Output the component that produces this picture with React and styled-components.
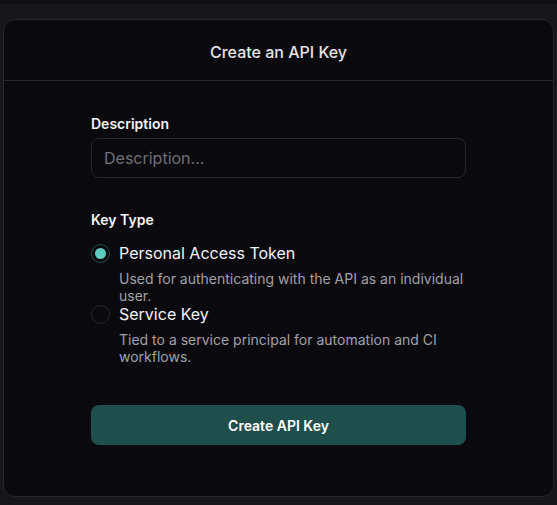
import React, { useState } from 'react';
import styled, { createGlobalStyle } from 'styled-components';

const GlobalStyle = createGlobalStyle`
  html, body {
    margin: 0;
    padding: 0;
    background: #17171b;
    font-family: Inter, "Noto Sans", sans-serif;
    -webkit-font-smoothing: antialiased;
  }
  * { box-sizing: border-box; }
`;

const Page = styled.div`
  width: 557px;
  height: 505px;
  background: #17171b;
  border-top: 4px solid #111114;
  padding: 15px 3px 0 3px;
`;

const Modal = styled.div`
  width: 551px;
  height: 478px;
  background: #0a0a0e;
  border: 1px solid #26262b;
  border-radius: 12px;
  display: flex;
  flex-direction: column;
  overflow: hidden;
`;

const Header = styled.div`
  height: 61px;
  flex: none;
  display: flex;
  align-items: center;
  justify-content: center;
  padding-top: 4px;
  border-bottom: 1px solid #26262b;
  color: #e4e4e7;
  font-size: 16px;
  font-weight: 500;
`;

const Body = styled.div`
  width: 375px;
  margin: 0 auto;
  padding-top: 34px;
  display: flex;
  flex-direction: column;
`;

const Label = styled.div`
  color: #f4f4f5;
  font-size: 14px;
  font-weight: 600;
  line-height: 17px;
  margin-bottom: ${({ gap }) => gap}px;
`;

const Input = styled.input`
  width: 100%;
  height: 40px;
  background: transparent;
  border: 1px solid #27272b;
  border-radius: 8px;
  padding: 0 12px;
  color: #e4e4e7;
  font-family: inherit;
  font-size: 16px;
  outline: none;
  margin-bottom: 33px;
  &::placeholder {
    color: #6f6f76;
  }
`;

const Options = styled.div`
  display: flex;
  flex-direction: column;
`;

const Option = styled.label`
  display: grid;
  grid-template-columns: 19px 1fr;
  column-gap: 9px;
  cursor: pointer;
`;

const Radio = styled.span`
  width: 19px;
  height: 19px;
  border-radius: 50%;
  border: 1px solid ${({ checked }) => (checked ? '#1d4b47' : '#26262b')};
  display: flex;
  align-items: center;
  justify-content: center;
  align-self: center;
  &::after {
    content: '';
    width: 11px;
    height: 11px;
    border-radius: 50%;
    background: #5ecdbf;
    display: ${({ checked }) => (checked ? 'block' : 'none')};
  }
`;

const OptionTitle = styled.span`
  color: #f4f4f5;
  font-size: 16px;
  line-height: 21px;
`;

const OptionDesc = styled.span`
  grid-column: 2;
  color: #a1a1a8;
  font-size: 14px;
  line-height: 17px;
  margin-top: 6px;
`;

const Button = styled.button`
  margin-top: 40px;
  height: 40px;
  width: 100%;
  background: #1f4f4d;
  border: none;
  border-radius: 8px;
  color: #ffffff;
  font-family: inherit;
  font-size: 14px;
  font-weight: 600;
  cursor: pointer;
`;

const keyTypes = [
  {
    id: 'pat',
    title: 'Personal Access Token',
    desc: 'Used for authenticating with the API as an individual user.',
  },
  {
    id: 'service',
    title: 'Service Key',
    desc: 'Tied to a service principal for automation and CI workflows.',
  },
];

export default function App() {
  const [type, setType] = useState('pat');
  return (
    <>
      <GlobalStyle />
      <Page>
        <Modal>
          <Header>Create an API Key</Header>
          <Body>
            <Label gap={6}>Description</Label>
            <Input placeholder="Description..." />
            <Label gap={15}>Key Type</Label>
            <Options>
              {keyTypes.map(t => (
                <Option key={t.id} onClick={() => setType(t.id)}>
                  <Radio checked={type === t.id} />
                  <OptionTitle>{t.title}</OptionTitle>
                  <OptionDesc>{t.desc}</OptionDesc>
                </Option>
              ))}
            </Options>
            <Button>Create API Key</Button>
          </Body>
        </Modal>
      </Page>
    </>
  );
}
